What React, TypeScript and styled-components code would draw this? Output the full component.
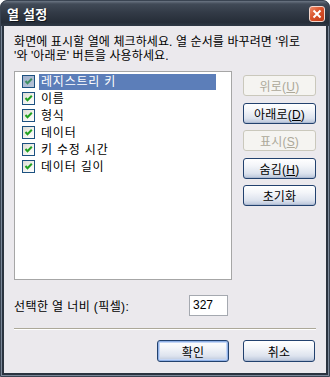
import React from "react";
import styled, { createGlobalStyle, css } from "styled-components";

const GlobalStyle = createGlobalStyle`
  html, body {
    margin: 0;
    padding: 0;
    background: #ffffff;
  }
  body {
    font-family: "Liberation Sans", "Noto Sans CJK KR", sans-serif;
    font-size: 12px;
  }
`;

const Window = styled.div`
  width: 330px;
  height: 377px;
  box-sizing: border-box;
  display: flex;
  flex-direction: column;
  border: 1px solid #3a4452;
  border-radius: 7px 7px 0 0;
  background: #2a333f;
  overflow: hidden;
`;

const TitleBar = styled.div`
  height: 25px;
  flex: none;
  display: flex;
  align-items: center;
  justify-content: space-between;
  padding: 0 4px 0 6px;
  background: linear-gradient(
    to bottom,
    #6b7583 0%,
    #414a57 12%,
    #333b47 45%,
    #262d38 85%,
    #2f3845 100%
  );
`;

const Title = styled.span`
  color: #ffffff;
  font-family: "Noto Sans CJK KR", sans-serif;
  font-weight: bold;
  font-size: 13px;
  letter-spacing: 0.5px;
  text-shadow: 1px 1px 0 #10151c;
`;

const CloseButton = styled.div`
  width: 16px;
  height: 16px;
  box-sizing: border-box;
  border: 1px solid #f3d6cc;
  border-radius: 3px;
  background: linear-gradient(135deg, #ee8a68 0%, #d9532c 45%, #c23b17 100%);
  display: flex;
  align-items: center;
  justify-content: center;
`;

const Frame = styled.div`
  flex: 1;
  display: flex;
  padding: 0 3px 3px;
  box-shadow: inset 1px 0 #7a8798, inset -1px 0 #7a8798, inset 0 -1px #7a8798;
`;

const Client = styled.div`
  flex: 1;
  display: flex;
  flex-direction: column;
  padding: 9px 10px 0 10px;
  background: #ebe9ed;
  color: #000000;
`;

const Instructions = styled.div`
  line-height: 14px;
  height: 28px;
  white-space: nowrap;
  letter-spacing: 0.1px;
`;

const MainRow = styled.div`
  display: flex;
  gap: 11px;
  margin-top: 8px;
`;

const ListBox = styled.div`
  width: 218px;
  height: 209px;
  box-sizing: border-box;
  border: 1px solid #a6a6a6;
  background: #ffffff;
  padding-top: 1px;
`;

const Row = styled.div`
  height: 17px;
  display: flex;
  align-items: center;
  padding-left: 7px;
`;

const Check = styled.span<{ selected?: boolean }>`
  width: 13px;
  height: 13px;
  box-sizing: border-box;
  border: 1px solid #1c5180;
  margin-right: 4px;
  display: flex;
  align-items: center;
  justify-content: center;
  background: ${({ selected }) =>
    selected
      ? "linear-gradient(135deg, #9fb0cc 0%, #b8c4d8 100%)"
      : "linear-gradient(135deg, #dcdcd4 0%, #f4f4f0 60%, #ffffff 100%)"};
`;

const ItemLabel = styled.span<{ selected?: boolean }>`
  width: 177px;
  height: 16px;
  line-height: 16px;
  padding-left: 2px;
  box-sizing: border-box;
  white-space: nowrap;
  letter-spacing: 0.8px;
  ${({ selected }) =>
    selected &&
    css`
      background: #5c7eb9;
      color: #ffffff;
    `}
`;

const ButtonColumn = styled.div`
  width: 73px;
  display: flex;
  flex-direction: column;
  gap: 6.6px;
  padding-top: 4px;
`;

const Button = styled.button<{ w?: number; h?: number; isDefault?: boolean }>`
  width: ${({ w }) => w ?? 73}px;
  height: ${({ h }) => h ?? 21}px;
  box-sizing: border-box;
  padding: 0;
  font-family: "Liberation Sans", "Noto Sans CJK KR", sans-serif;
  font-size: 12px;
  letter-spacing: 0.2px;
  color: #000000;
  border: 1px solid #22416e;
  border-radius: 3px;
  background: linear-gradient(
    to bottom,
    #ffffff 0%,
    #f3f5f9 35%,
    #dde3ee 75%,
    #b9c5da 100%
  );
  box-shadow: ${({ isDefault }) =>
    isDefault
      ? "inset 0 0 0 1px #8fb0e6, inset 0 0 0 2px #c4d6f5"
      : "inset 0 -1px 0 #aebbd2"};
  &:disabled {
    color: #aca899;
    border-color: #cac8bc;
    background: #f5f4f1;
    box-shadow: none;
  }
`;

const WidthRow = styled.div`
  display: flex;
  align-items: center;
  margin-top: 15px;
  height: 21px;
`;

const WidthLabel = styled.span`
  width: 175px;
  letter-spacing: 0.4px;
`;

const WidthInput = styled.div`
  width: 39px;
  height: 21px;
  box-sizing: border-box;
  border: 1px solid #a5a9b0;
  background: #ffffff;
  padding: 0 3px;
  line-height: 19px;
  font-size: 12px;
`;

const Separator = styled.div`
  margin-top: 12px;
  border-top: 1px solid #aca899;
  border-bottom: 1px solid #ffffff;
`;

const Footer = styled.div`
  display: flex;
  justify-content: flex-end;
  gap: 14px;
  margin-top: 10px;
  padding-right: 1px;
`;

const items = ["레지스트리 키", "이름", "형식", "데이터", "키 수정 시간", "데이터 길이"];

const CheckMark = ({ dim }: { dim?: boolean }) => (
  <svg width="9" height="9" viewBox="0 0 9 9">
    <path
      d="M1.5 4 L3.5 6.2 L7.8 1.8"
      fill="none"
      stroke={dim ? "#3f8f62" : "#21a121"}
      strokeWidth="2"
    />
  </svg>
);

const App: React.FC = () => {
  return (
    <>
      <GlobalStyle />
      <Window>
        <TitleBar>
          <Title>열 설정</Title>
          <CloseButton>
            <svg width="10" height="10" viewBox="0 0 10 10">
              <path d="M1.5 1.5 L8.5 8.5 M8.5 1.5 L1.5 8.5" stroke="#ffffff" strokeWidth="2" />
            </svg>
          </CloseButton>
        </TitleBar>
        <Frame>
          <Client>
            <Instructions>
              화면에 표시할 열에 체크하세요. 열 순서를 바꾸려면 '위로
              <br />
              '와 '아래로' 버튼을 사용하세요.
            </Instructions>
            <MainRow>
              <ListBox>
                {items.map((item, i) => (
                  <Row key={item}>
                    <Check selected={i === 0}>
                      <CheckMark dim={i === 0} />
                    </Check>
                    <ItemLabel selected={i === 0}>{item}</ItemLabel>
                  </Row>
                ))}
              </ListBox>
              <ButtonColumn>
                <Button disabled>
                  위로(<u>U</u>)
                </Button>
                <Button>
                  아래로(<u>D</u>)
                </Button>
                <Button disabled>
                  표시(<u>S</u>)
                </Button>
                <Button>
                  숨김(<u>H</u>)
                </Button>
                <Button>초기화</Button>
              </ButtonColumn>
            </MainRow>
            <WidthRow>
              <WidthLabel>선택한 열 너비 (픽셀):</WidthLabel>
              <WidthInput>327</WidthInput>
            </WidthRow>
            <Separator />
            <Footer>
              <Button w={72} h={22} isDefault>
                확인
              </Button>
              <Button w={72} h={22}>
                취소
              </Button>
            </Footer>
          </Client>
        </Frame>
      </Window>
    </>
  );
};

export default App;
